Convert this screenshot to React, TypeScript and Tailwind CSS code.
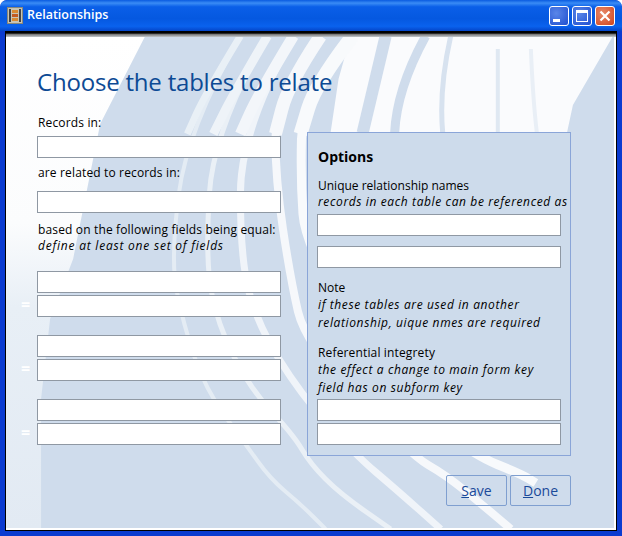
import React from "react";

const font = { fontFamily: '"Open Sans", "Noto Sans", "DejaVu Sans", sans-serif' };

function Field({ className = "" }: { className?: string }) {
  return <div className={`h-[22px] w-[244px] border border-[#8f98a3] bg-white ${className}`} />;
}

function EqRow() {
  return (
    <div className="ml-[-16px] mt-[2px] flex items-center">
      <span className="mt-[-4px] w-[16px] text-[16px] font-bold leading-[22px] text-white">=</span>
      <Field />
    </div>
  );
}

type Pt = [number, number];

function smooth(p: Pt[]) {
  let d = `M${p[0][0]} ${p[0][1]}`;
  for (let i = 1; i < p.length - 1; i++) {
    const mx = (p[i][0] + p[i + 1][0]) / 2;
    const my = (p[i][1] + p[i + 1][1]) / 2;
    d += `Q${p[i][0]} ${p[i][1]} ${mx} ${my}`;
  }
  const l = p[p.length - 1];
  return `${d}L${l[0]} ${l[1]}`;
}

function Background() {
  const stripes: { p: Pt[]; w: number; c: string }[] = [
    { p: [[240, 37], [187, 130], [170, 260], [183, 325], [205, 390], [245, 445], [270, 480], [300, 505], [325, 530]], w: 4, c: "#e4ecf4" },
    { p: [[267, 37], [213, 130], [205, 260], [217, 325], [250, 390], [293, 436], [310, 465], [340, 495], [390, 530]], w: 5, c: "#eaf0f6" },
    { p: [[293, 37], [240, 130], [240, 260], [257, 325], [300, 395], [355, 456], [395, 490], [440, 530]], w: 7, c: "#f0f4f9" },
    { p: [[320, 37], [275, 100], [275, 180], [290, 280], [305, 345], [410, 456], [445, 476], [483, 507], [510, 530]], w: 8, c: "#f6f8fb" },
    { p: [[352, 37], [302, 100], [300, 180], [305, 250], [400, 400], [473, 456], [520, 475], [535, 484]], w: 9, c: "#f8fafc" },
  ];
  const tops: { p: Pt[]; w: number; c: string }[] = [
    { p: [[240, 37], [205, 95], [187, 135]], w: 7, c: "#e9f0f6" },
    { p: [[267, 37], [233, 95], [213, 135]], w: 9, c: "#eef3f8" },
    { p: [[293, 37], [258, 95], [240, 135]], w: 11, c: "#f3f6fa" },
    { p: [[320, 37], [288, 85], [275, 135]], w: 13, c: "#f6f8fb" },
    { p: [[352, 37], [315, 85], [300, 135]], w: 14, c: "#f8fafc" },
  ];
  return (
    <svg className="absolute inset-0 h-full w-full" viewBox="0 0 607 491" preserveAspectRatio="none">
      <defs>
        <linearGradient id="wedge" x1="0" y1="0" x2="0" y2="1">
          <stop offset="0" stopColor="#ffffff" />
          <stop offset="0.38" stopColor="#fbfcfd" />
          <stop offset="0.55" stopColor="#e8eff6" />
          <stop offset="1" stopColor="#e2eaf3" />
        </linearGradient>
      </defs>
      <g transform="translate(-6 -38)">
        <rect x="6" y="38" width="607" height="491" fill="#cfdcec" />
        <path d="M6 37H145L100 125L73 260L50 320L41 400V530H6Z" fill="url(#wedge)" />
        <path d="M350 37H612L572 106L566 134H330L338 80Z" fill="#fafbfd" />
        <path d="M385 37L362 134" fill="none" stroke="#cfdcec" strokeWidth="12" />
        <path d="M425 37Q396 90 394 134" fill="none" stroke="#cfdcec" strokeWidth="9" />
        <path d="M450 37Q438 90 442 134" fill="none" stroke="#d7e2ef" strokeWidth="5" />
        <path d="M497 50V134" fill="none" stroke="#dfe8f2" strokeWidth="4" />
        <path d="M530 50Q532 100 536 134" fill="none" stroke="#e9eff6" strokeWidth="4" />
        {stripes.map((s, i) => (
          <path key={i} d={smooth(s.p)} fill="none" stroke={s.c} strokeWidth={s.w} />
        ))}
        {tops.map((s, i) => (
          <path key={i} d={smooth(s.p)} fill="none" stroke={s.c} strokeWidth={s.w} />
        ))}
      </g>
    </svg>
  );
}

function TitleButton({ children, red = false }: { children: React.ReactNode; red?: boolean }) {
  return (
    <div
      className={`flex h-[20px] w-[20px] items-center justify-center rounded-[3px] border border-white ${
        red ? "bg-[radial-gradient(circle_at_35%_35%,#e88a6a,#d0431c)]" : "bg-[radial-gradient(circle_at_35%_35%,#5a86e8,#1f4fd0)]"
      }`}
    >
      {children}
    </div>
  );
}

const label = "pl-[1px] font-medium tracking-[0.15px]";
const note = "pl-[1px] whitespace-nowrap font-medium italic tracking-[0.62px]";

export default function App() {
  return (
    <div className="flex h-[536px] w-[622px] flex-col overflow-hidden rounded-t-[7px] bg-[#0b3bd0]" style={font}>
      <div className="flex h-[31px] shrink-0 items-center justify-between rounded-t-[7px] bg-[linear-gradient(180deg,#0a5be0_0%,#3a8cf5_10%,#0a5fe8_22%,#0558e0_60%,#0a62ee_85%,#0445c8_100%)] pl-[7px] pr-[7px]">
        <div className="flex items-center gap-[4px]">
          <svg width="16" height="17" viewBox="0 0 16 17">
            <rect x="0.5" y="0.5" width="15" height="16" fill="#c8c4b4" stroke="#8a8878" />
            <rect x="2" y="2" width="2" height="13" fill="#444" />
            <rect x="12" y="2" width="2" height="13" fill="#444" />
            <rect x="5" y="3" width="6" height="3" fill="#d98a30" />
            <rect x="5" y="7" width="6" height="3" fill="#c05a20" />
            <rect x="5" y="11" width="6" height="3" fill="#d98a30" />
          </svg>
          <span className="text-[12.5px] font-semibold text-white">Relationships</span>
        </div>
        <div className="flex gap-[3px]">
          <TitleButton>
            <div className="mt-[9px] mr-[5px] h-[3px] w-[7px] bg-white" />
          </TitleButton>
          <TitleButton>
            <div className="h-[12px] w-[12px] border border-t-[3px] border-white" />
          </TitleButton>
          <TitleButton red>
            <svg width="12" height="12" viewBox="0 0 12 12">
              <path d="M1.5 1.5L10.5 10.5M10.5 1.5L1.5 10.5" stroke="#fff" strokeWidth="2.2" />
            </svg>
          </TitleButton>
        </div>
      </div>

      <div className="mx-[5px] mb-[5px] flex flex-1 flex-col border-x border-b border-black bg-white">
        <div className="h-[6px] shrink-0 bg-[linear-gradient(180deg,#000_0%,#000_35%,#777_55%,#c4c8cc_100%)]" />
        <div className="relative mr-[2px] mb-[2px] flex flex-1 text-[12px] text-black">
          <Background />
          <div className="relative flex pl-[31px]">
            <div className="w-[244px]">
              <div className="mt-[30px] h-[30px] whitespace-nowrap text-[24px] tracking-[-0.2px] leading-[30px] text-[#0d4a94]">Choose the tables to relate</div>
              <div className={`mt-[18px] h-[16px] leading-[16px] ${label}`}>Records in:</div>
              <Field className="mt-[5px]" />
              <div className={`mt-[7px] h-[16px] leading-[16px] ${label}`}>are related to records in:</div>
              <Field className="mt-[10px]" />
              <div className={`mt-[9px] h-[16px] whitespace-nowrap leading-[16px] ${label}`}>based on the following fields being equal:</div>
              <div className="h-[15px] pl-[1px] whitespace-nowrap font-medium italic leading-[15px] tracking-[0.78px]">define at least one set of fields</div>
              <Field className="mt-[18px]" />
              <EqRow />
              <Field className="mt-[18px]" />
              <EqRow />
              <Field className="mt-[18px]" />
              <EqRow />
            </div>
            <div className="ml-[26px] w-[264px] pt-[95px]">
              <div className="h-[324px] border border-[#8aa5d8] bg-[#cddbeb] pl-[9px]">
                <div className="mt-[15px] h-[18px] pl-[1px] text-[14px] font-bold leading-[18px]">Options</div>
                <div className="mt-[12px] h-[16px] pl-[1px] font-medium leading-[16px]">Unique relationship names</div>
                <div className={`h-[16px] leading-[16px] ${note}`}>records in each table can be referenced as</div>
                <Field className="mt-[4px]" />
                <Field className="mt-[10px]" />
                <div className="mt-[11px] h-[17px] pl-[1px] font-medium leading-[18px]">Note</div>
                <div className={`h-[18px] leading-[18px] ${note}`}>if these tables are used in another</div>
                <div className={`h-[18px] leading-[18px] ${note}`}>relationship, uique nmes are required</div>
                <div className={`mt-[12px] h-[17px] leading-[18px] ${label}`}>Referential integrety</div>
                <div className={`h-[18px] leading-[18px] ${note}`}>the effect a change to main form key</div>
                <div className={`h-[18px] leading-[18px] ${note}`}>field has on subform key</div>
                <Field className="mt-[2px]" />
                <Field className="mt-[2px]" />
              </div>
              <div className="mt-[19px] flex justify-end gap-[3px]">
                <button className="h-[31px] w-[61px] rounded-[2px] border border-[#7f9fd0] text-[14px] text-[#1a4a9a]">
                  <span className="underline">S</span>ave
                </button>
                <button className="h-[31px] w-[61px] rounded-[2px] border border-[#7f9fd0] text-[14px] text-[#1a4a9a]">
                  <span className="underline">D</span>one
                </button>
              </div>
            </div>
          </div>
        </div>
      </div>
    </div>
  );
}
